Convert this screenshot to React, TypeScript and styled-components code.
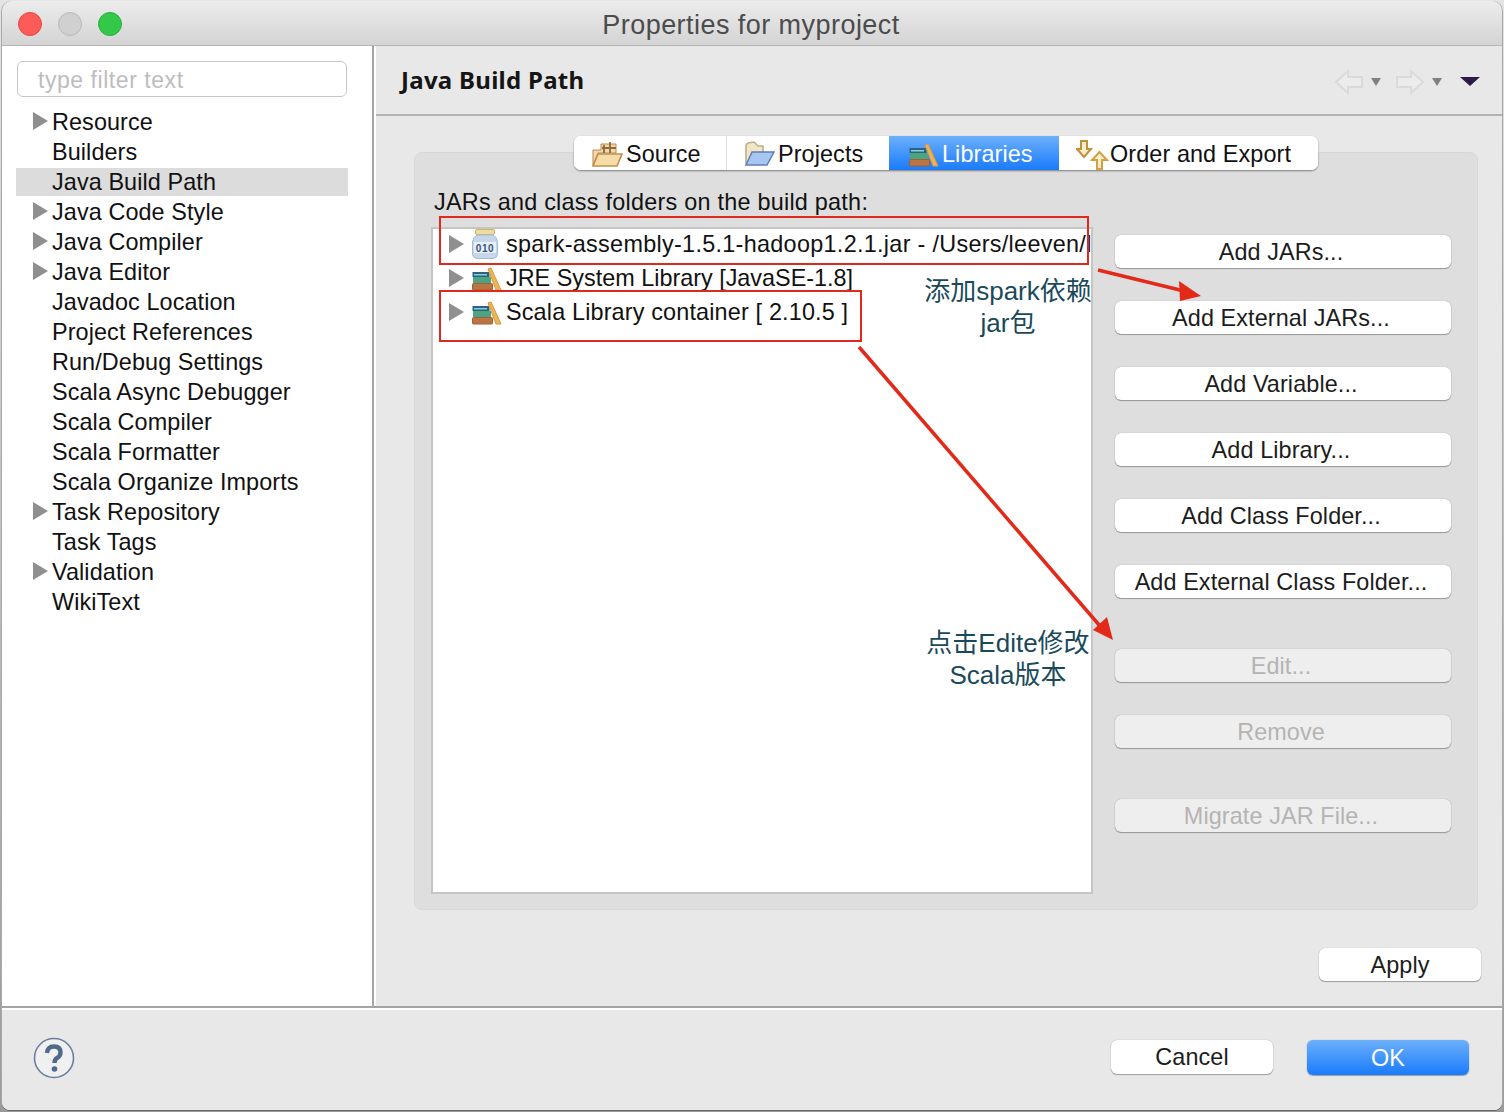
import React from 'react';
import styled, { createGlobalStyle } from 'styled-components';

const FONT = '"Liberation Sans", "Noto Sans CJK SC", Arial, sans-serif';

const GlobalStyle = createGlobalStyle`
  html, body {
    margin: 0;
    padding: 0;
    background: #f4f4f4;
  }
  body {
    font-family: ${FONT};
    color: #111;
  }
`;

const Screen = styled.div`
  position: relative;
  width: 1504px;
  height: 1112px;
  padding: 1px 2px;
  box-sizing: border-box;
  overflow: hidden;
  background: linear-gradient(#e4e4e4, #9a9a9a);
`;

const Window = styled.div`
  display: flex;
  flex-direction: column;
  width: 1500px;
  height: 1109px;
  border-radius: 10px 10px 8px 8px;
  overflow: hidden;
  background: #e8e8e8;
  box-shadow: 0 1px 0 #666, -1px 0 0 #a8a8a8, 1px 0 0 #a8a8a8;
`;

const TitleBar = styled.div`
  position: relative;
  flex: 0 0 45px;
  display: flex;
  align-items: center;
  justify-content: center;
  box-sizing: border-box;
  border-bottom: 1px solid #b4b4b4;
  background: linear-gradient(#ececec, #d4d4d4);
`;

const Lights = styled.div`
  position: absolute;
  top: 11px;
  left: 16px;
  display: flex;
  gap: 16px;
`;

const Light = styled.span<{ $color: string; $edge: string }>`
  width: 24px;
  height: 24px;
  box-sizing: border-box;
  border-radius: 50%;
  border: 1px solid ${(p) => p.$edge};
  background: ${(p) => p.$color};
`;

const TitleText = styled.div`
  font-size: 27px;
  color: #4c4c4c;
  letter-spacing: 0.45px;
  margin: 5px 2px 0 0;
`;

const Body = styled.div`
  flex: 0 0 960px;
  display: flex;
`;

const Sidebar = styled.div`
  flex: 0 0 370px;
  box-sizing: border-box;
  padding: 15px 24px 0 14px;
  background: #fff;
`;

const SideRule = styled.div`
  flex: 0 0 4px;
  box-sizing: border-box;
  border-left: 2px solid #a6a6a6;
  background: #fff;
`;

const FilterBox = styled.div`
  margin: 0 0 10px 1px;
  width: 330px;
  height: 36px;
  box-sizing: border-box;
  display: flex;
  align-items: center;
  padding: 2px 0 0 20px;
  border: 1px solid #c6c6c6;
  border-radius: 6px;
  font-size: 23px;
  letter-spacing: 0.55px;
  color: #bdbdbd;
`;

const TreeList = styled.div`
  display: flex;
  flex-direction: column;
`;

const TreeRow = styled.div<{ $selected?: boolean }>`
  position: relative;
  display: flex;
  align-items: center;
  width: 332px;
  height: ${(p) => (p.$selected ? '28px' : '30px')};
  margin: ${(p) => (p.$selected ? '1px 0' : '0')};
  padding-left: 36px;
  box-sizing: border-box;
  background: ${(p) => (p.$selected ? '#dcdcdc' : 'transparent')};
  font-size: 23.4px;
  letter-spacing: 0.1px;
  white-space: nowrap;
`;

const Twisty = styled.span`
  position: absolute;
  left: 17px;
  top: 50%;
  margin-top: -10px;
  width: 0;
  height: 0;
  border-style: solid;
  border-width: 9px 0 9px 15px;
  border-color: transparent transparent transparent #8f8f8f;
`;

const Main = styled.div`
  flex: 1;
  display: flex;
  flex-direction: column;
  min-width: 0;
`;

const MainHeader = styled.div`
  flex: 0 0 70px;
  display: flex;
  align-items: center;
  justify-content: space-between;
  box-sizing: border-box;
  padding: 3px 22px 0 24px;
  border-bottom: 2px solid #b2b2b2;
`;

const PageTitle = styled.h1`
  margin: -4px 0 0 1px;
  font-family: "Noto Sans", sans-serif;
  font-size: 24px;
  font-weight: 700;
  letter-spacing: 0.28px;
  color: #151515;
`;

const NavIcons = styled.div`
  display: flex;
  align-items: center;
  gap: 14px;
`;

const NavGroup = styled.div`
  display: flex;
  align-items: center;
  gap: 7px;
`;

const Caret = styled.span<{ $color?: string; $wide?: boolean }>`
  width: 0;
  height: 0;
  margin-left: ${(p) => (p.$wide ? '4px' : '0')};
  border-style: solid;
  border-width: ${(p) => (p.$wide ? '9px 10px 0 10px' : '8px 5px 0 5px')};
  border-color: ${(p) => p.$color ?? '#808080'} transparent transparent transparent;
`;

const Content = styled.div`
  flex: 1;
  display: flex;
  flex-direction: column;
  padding: 20px 24px 0 38px;
`;

const Tabs = styled.div`
  position: relative;
  z-index: 1;
  display: flex;
  align-self: center;
  height: 34px;
  margin-bottom: -18px;
  border-radius: 7px;
  overflow: hidden;
  background: #fff;
  box-shadow: 0 1px 2px rgba(0, 0, 0, 0.45);
`;

const Tab = styled.div<{ $active?: boolean; $width: number; $divider?: boolean; $pad: number; $gap: number }>`
  display: flex;
  align-items: center;
  box-sizing: border-box;
  gap: ${(p) => p.$gap}px;
  width: ${(p) => p.$width}px;
  padding: 2px 0 0 ${(p) => p.$pad}px;
  font-size: 23.4px;
  letter-spacing: 0.1px;
  white-space: nowrap;
  color: ${(p) => (p.$active ? '#fff' : '#111')};
  background: ${(p) => (p.$active ? 'linear-gradient(#6cb0fb, #1a7bfb)' : '#fff')};
  border-right: ${(p) => (p.$divider ? '1px solid #dedede' : '0')};
`;

const GroupPanel = styled.div`
  height: 758px;
  box-sizing: border-box;
  padding: 35px 19px 0 16px;
  border: 1px solid #d8d8d8;
  border-radius: 8px;
  background: #dedede;
`;

const GroupLabel = styled.div`
  height: 28px;
  margin: 0 0 11px 3px;
  font-size: 23.4px;
  line-height: 28px;
  letter-spacing: 0.25px;
`;

const GroupRow = styled.div`
  display: flex;
  gap: 22px;
`;

const PathList = styled.div`
  width: 662px;
  height: 667px;
  box-sizing: border-box;
  border: 2px solid #c6c6c6;
  background: #fff;
  overflow: hidden;
`;

const PathRow = styled.div<{ $tracking: number }>`
  display: flex;
  align-items: center;
  height: 30px;
  margin-bottom: 4px;
  padding-left: 16px;
  font-size: 23.4px;
  letter-spacing: ${(p) => p.$tracking}px;
  white-space: nowrap;
`;

const PathTwisty = styled.span`
  flex: none;
  width: 0;
  height: 0;
  margin-right: 7px;
  border-style: solid;
  border-width: 9px 0 9px 15px;
  border-color: transparent transparent transparent #8f8f8f;
`;

const PathIcon = styled.span`
  flex: none;
  display: flex;
  align-items: center;
  width: 35px;
  height: 30px;
`;

const ButtonColumn = styled.div`
  display: flex;
  flex-direction: column;
  padding-top: 8px;
  gap: 33px;
`;

const PushButton = styled.div<{ $disabled?: boolean; $primary?: boolean; $width?: number; $height?: number }>`
  display: flex;
  align-items: center;
  justify-content: center;
  width: ${(p) => p.$width ?? 336}px;
  height: ${(p) => p.$height ?? 33}px;
  padding-top: 1px;
  box-sizing: border-box;
  border-radius: 6px;
  font-size: 23.4px;
  letter-spacing: 0.1px;
  color: ${(p) => (p.$primary ? '#fff' : p.$disabled ? '#b5b3b3' : '#1c1c1c')};
  background: ${(p) =>
    p.$primary ? 'linear-gradient(#6cb0fb, #1a7bfb)' : p.$disabled ? '#eeeeee' : '#fff'};
  box-shadow: 0 0 1px rgba(0, 0, 0, 0.35), 0 1px 1px rgba(0, 0, 0, 0.3);
`;

const SideButton = styled(PushButton)<{ $gapBefore?: number }>`
  margin-top: ${(p) => p.$gapBefore ?? 0}px;
  padding-right: 4px;
`;

const ApplyRow = styled.div`
  display: flex;
  justify-content: flex-end;
  margin: 38px -3px 0 0;
`;

const Footer = styled.div`
  flex: 1;
  display: flex;
  align-items: center;
  justify-content: space-between;
  box-sizing: border-box;
  padding: 0 33px 3px 31px;
  border-top: 2px solid #a4a4a4;
  box-shadow: inset 0 2px 0 #fff;
  background: #e8e8e8;
`;

const FooterButtons = styled.div`
  display: flex;
  align-items: flex-start;
  gap: 34px;
`;

const RedBox = styled.div<{ $x: number; $y: number; $w: number; $h: number }>`
  position: absolute;
  left: ${(p) => p.$x}px;
  top: ${(p) => p.$y}px;
  width: ${(p) => p.$w}px;
  height: ${(p) => p.$h}px;
  box-sizing: border-box;
  border: 2px solid #e0281c;
  pointer-events: none;
`;

const Arrows = styled.svg`
  position: absolute;
  left: 0;
  top: 0;
  pointer-events: none;
`;

const Note = styled.div<{ $top: number }>`
  position: absolute;
  left: 908px;
  top: ${(p) => p.$top}px;
  width: 200px;
  text-align: center;
  font-size: 26px;
  line-height: 32px;
  color: #1a4a5a;
  white-space: nowrap;
`;

const BooksIcon = () => (
  <svg width="31" height="26" viewBox="0 0 31 26">
    <rect x="1.5" y="18.5" width="20" height="6.5" rx="1" fill="#bb7545" stroke="#a05f34" />
    <rect x="2" y="12" width="18" height="6" fill="#4ba583" />
    <rect x="1.5" y="7" width="17" height="5" fill="#2c6480" />
    <rect x="3" y="9" width="13" height="1.5" fill="#8ccbd8" />
    <path d="M17 4 L20 3 L30 25 L25 25 Z" fill="#edb355" stroke="#d39a45" />
  </svg>
);

const JarIcon = () => (
  <svg width="28" height="30" viewBox="0 0 28 30">
    <rect x="4.5" y="0.5" width="19" height="5" rx="1.5" fill="#efdc9f" stroke="#cfb36a" />
    <path d="M6 6 H22 Q26 8 26.5 13 V24 Q26.5 29.5 21 29.5 H7 Q1.5 29.5 1.5 24 V13 Q2 8 6 6 Z" fill="#c6d7ec" stroke="#a3b9d6" />
    <rect x="3" y="13" width="22" height="11" fill="#e9f0f9" />
    <text x="14" y="22.5" textAnchor="middle" fontSize="10" fontWeight="700" letterSpacing="0.6" fontFamily="Liberation Sans, sans-serif" fill="#35557e">
      010
    </text>
  </svg>
);

const SourceIcon = () => (
  <svg width="32" height="26" viewBox="0 0 32 26">
    <path d="M2 9 H10 V3 H25 V12 H7 L2 24 Z" fill="#f1d9ab" stroke="#b88a4e" />
    <path d="M13 4 V12 M19 1 V12 M11 7 H25" stroke="#8a6a3e" strokeWidth="1.8" fill="none" />
    <path d="M7 13 H31 L26 25 H2 Z" fill="#f6dca6" stroke="#c08f50" strokeWidth="1.6" />
  </svg>
);

const FolderIcon = () => (
  <svg width="31" height="26" viewBox="0 0 31 26">
    <path d="M2 23 V5 Q2 3 4 2 L10 1 L14 5 H19 V11" fill="#f3e6c4" stroke="#bcae92" strokeWidth="1.6" />
    <path d="M8 11 H30 L23 24 H2 Z" fill="#a7c7f1" stroke="#5f7fbb" strokeWidth="1.5" />
  </svg>
);

const OrderIcon = () => (
  <svg width="33" height="32" viewBox="0 0 33 32">
    <path d="M5 3 H11 V11 H15 L8 19 L1 11 H5 Z" fill="#f9efcf" stroke="#bf9438" strokeWidth="2" />
    <path d="M21 31 H26 V22 H31 L23.5 14 L16 22 H21 Z" fill="#f9efcf" stroke="#d6a040" strokeWidth="2" />
  </svg>
);

const GhostArrow = ({ flip }: { flip?: boolean }) => (
  <svg width="30" height="26" viewBox="0 0 30 26" style={flip ? { transform: 'scaleX(-1)' } : undefined}>
    <path d="M14 2 L2 13 L14 24 V18 H28 V8 H14 Z" fill="#ececec" stroke="#dadada" strokeWidth="2" />
  </svg>
);

const HelpIcon = () => (
  <svg width="42" height="42" viewBox="0 0 42 42">
    <circle cx="21" cy="21" r="19.5" fill="#f0f0f0" stroke="#6c7f9c" strokeWidth="1.6" />
    <path d="M14 16 Q14.5 9.5 21 9.5 Q27.5 9.5 27.5 15.5 Q27.5 19 24 21 Q21.5 22.5 21.5 26" fill="none" stroke="#506a8e" strokeWidth="4.4" />
    <circle cx="21.5" cy="32" r="2.8" fill="#506a8e" />
  </svg>
);

const SIDE_ITEMS: { label: string; twisty?: boolean; selected?: boolean }[] = [
  { label: 'Resource', twisty: true },
  { label: 'Builders' },
  { label: 'Java Build Path', selected: true },
  { label: 'Java Code Style', twisty: true },
  { label: 'Java Compiler', twisty: true },
  { label: 'Java Editor', twisty: true },
  { label: 'Javadoc Location' },
  { label: 'Project References' },
  { label: 'Run/Debug Settings' },
  { label: 'Scala Async Debugger' },
  { label: 'Scala Compiler' },
  { label: 'Scala Formatter' },
  { label: 'Scala Organize Imports' },
  { label: 'Task Repository', twisty: true },
  { label: 'Task Tags' },
  { label: 'Validation', twisty: true },
  { label: 'WikiText' },
];

const SIDE_BUTTONS: { label: string; disabled?: boolean; gapBefore?: number }[] = [
  { label: 'Add JARs...' },
  { label: 'Add External JARs...' },
  { label: 'Add Variable...' },
  { label: 'Add Library...' },
  { label: 'Add Class Folder...' },
  { label: 'Add External Class Folder...' },
  { label: 'Edit...', disabled: true, gapBefore: 18 },
  { label: 'Remove', disabled: true },
  { label: 'Migrate JAR File...', disabled: true, gapBefore: 18 },
];

export default function App() {
  return (
    <Screen>
      <GlobalStyle />
      <Window>
        <TitleBar>
          <Lights>
            <Light $color="#fc5b57" $edge="#e2463f" />
            <Light $color="#d0d0d0" $edge="#b8b8b8" />
            <Light $color="#34c84a" $edge="#2aad3b" />
          </Lights>
          <TitleText>Properties for myproject</TitleText>
        </TitleBar>
        <Body>
          <Sidebar>
            <FilterBox>type filter text</FilterBox>
            <TreeList>
              {SIDE_ITEMS.map((item) => (
                <TreeRow key={item.label} $selected={item.selected}>
                  {item.twisty && <Twisty />}
                  {item.label}
                </TreeRow>
              ))}
            </TreeList>
          </Sidebar>
          <SideRule />
          <Main>
            <MainHeader>
              <PageTitle>Java Build Path</PageTitle>
              <NavIcons>
                <NavGroup>
                  <GhostArrow />
                  <Caret />
                </NavGroup>
                <NavGroup>
                  <GhostArrow flip />
                  <Caret />
                </NavGroup>
                <Caret $wide $color="#2c1a4a" />
              </NavIcons>
            </MainHeader>
            <Content>
              <Tabs>
                <Tab $width={153} $divider $pad={17} $gap={3}>
                  <SourceIcon />
                  Source
                </Tab>
                <Tab $width={162} $pad={17} $gap={3}>
                  <FolderIcon />
                  Projects
                </Tab>
                <Tab $width={170} $active $pad={19} $gap={3}>
                  <BooksIcon />
                  Libraries
                </Tab>
                <Tab $width={259} $pad={17} $gap={1}>
                  <OrderIcon />
                  Order and Export
                </Tab>
              </Tabs>
              <GroupPanel>
                <GroupLabel>JARs and class folders on the build path:</GroupLabel>
                <GroupRow>
                  <PathList>
                    <PathRow $tracking={0.3}>
                      <PathTwisty />
                      <PathIcon>
                        <JarIcon />
                      </PathIcon>
                      spark-assembly-1.5.1-hadoop1.2.1.jar - /Users/leeven/l
                    </PathRow>
                    <PathRow $tracking={0}>
                      <PathTwisty />
                      <PathIcon>
                        <BooksIcon />
                      </PathIcon>
                      JRE System Library [JavaSE-1.8]
                    </PathRow>
                    <PathRow $tracking={0.16}>
                      <PathTwisty />
                      <PathIcon>
                        <BooksIcon />
                      </PathIcon>
                      Scala Library container [ 2.10.5 ]
                    </PathRow>
                  </PathList>
                  <ButtonColumn>
                    {SIDE_BUTTONS.map((b) => (
                      <SideButton key={b.label} $disabled={b.disabled} $gapBefore={b.gapBefore}>
                        {b.label}
                      </SideButton>
                    ))}
                  </ButtonColumn>
                </GroupRow>
              </GroupPanel>
              <ApplyRow>
                <PushButton $width={162}>Apply</PushButton>
              </ApplyRow>
            </Content>
          </Main>
        </Body>
        <Footer>
          <HelpIcon />
          <FooterButtons>
            <PushButton $width={162} $height={34}>Cancel</PushButton>
            <PushButton $width={162} $height={35} $primary>
              OK
            </PushButton>
          </FooterButtons>
        </Footer>
      </Window>

      <RedBox $x={439} $y={216} $w={650} $h={49} />
      <RedBox $x={439} $y={290} $w={423} $h={52} />
      <Arrows width="1504" height="1112" viewBox="0 0 1504 1112">
        <path d="M1098 270 L1184 291" stroke="#e3291a" strokeWidth="3.5" fill="none" />
        <path d="M1201 296 L1179 281 L1180 301 Z" fill="#e3291a" />
        <path d="M859 347 L1100 626" stroke="#e3291a" strokeWidth="3.5" fill="none" />
        <path d="M1113 640 L1107 617 L1093 630 Z" fill="#e3291a" />
      </Arrows>
      <Note $top={275}>
        添加spark依赖
        <br />
        jar包
      </Note>
      <Note $top={627}>
        点击Edite修改
        <br />
        Scala版本
      </Note>
    </Screen>
  );
}
